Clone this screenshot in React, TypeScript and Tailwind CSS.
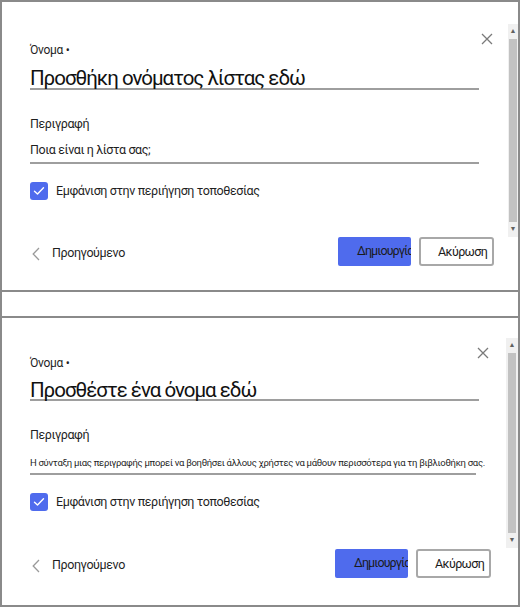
import React from "react";

type PanelProps = {
  title: string;
  description: string;
  descSmall?: boolean;
  variant: "top" | "bottom";
};

const Check = () => (
  <svg width="12" height="10" viewBox="0 0 12 10" fill="none">
    <path d="M1.5 5.2 L4.5 8 L10.5 1.8" stroke="white" strokeWidth="1.4" strokeLinecap="round" strokeLinejoin="round" />
  </svg>
);

const Close = () => (
  <svg width="12" height="12" viewBox="0 0 12 12" fill="none">
    <path d="M1 1 L11 11 M11 1 L1 11" stroke="#7a7a7a" strokeWidth="1.3" />
  </svg>
);

const Chevron = () => (
  <svg width="8" height="14" viewBox="0 0 8 14" fill="none">
    <path d="M7 1 L1.2 7 L7 13" stroke="#9a9a9a" strokeWidth="1.3" />
  </svg>
);

const Scrollbar = ({ top }: { top: boolean }) => (
  <div
    className={
      top
        ? "mt-[22px] flex h-[213px] w-[10px] flex-col items-center bg-[#f0f0f0]"
        : "mt-[20px] flex h-[210px] w-[12px] flex-col items-center bg-[#f0f0f0]"
    }
  >
    <div className="flex h-[15px] items-center text-[7px] leading-none text-[#606060]">▲</div>
    <div className="w-[8px] flex-1 bg-[#c2c2c2]" />
    <div className="flex h-[15px] items-center text-[7px] leading-none text-[#606060]">▼</div>
  </div>
);

function Panel({ title, description, descSmall, variant }: PanelProps) {
  const top = variant === "top";
  return (
    <div className={top ? "relative flex h-[290px] border-b-2 border-[#8a8a8a]" : "relative flex h-[289px] border-t-2 border-[#8a8a8a]"}>
      <div className={top ? "flex-1 pl-[28px] pt-[40px]" : "flex-1 pl-[28px] pt-[37px]"}>
        <div className="w-[449px]">
          <div className="text-[12px] leading-[16px] tracking-[-0.3px] text-[#1f1f1f]">Όνομα •</div>
          <div
            className={
              top
                ? "mt-[3px] h-[29px] border-b-2 border-[#9e9e9e] pt-[6px] text-[20.5px] leading-[22px] tracking-[-1px] text-[#111]"
                : "mt-0 h-[30px] border-b-2 border-[#9e9e9e] pt-[8px] text-[20.5px] leading-[22px] tracking-[-1px] text-[#111]"
            }
          >
            {title}
          </div>
          <div className="mt-[25px] text-[12.5px] leading-[18px] tracking-[-0.4px] text-[#1f1f1f]">Περιγραφή</div>
          {descSmall ? (
            <div className="mt-[11px] w-[446px] whitespace-nowrap border-b-2 border-[#9e9e9e] pb-[2px] text-[9.5px] leading-[16px] tracking-[-0.3px] text-[#1f1f1f]">
              {description}
            </div>
          ) : (
            <div className="mt-[8px] border-b-2 border-[#9e9e9e] pb-[3px] text-[12.5px] leading-[18px] tracking-[-0.4px] text-[#1f1f1f]">
              {description}
            </div>
          )}
          <div className="mt-[18px] flex items-center gap-[8px]">
            <div className="flex h-[18px] w-[18px] items-center justify-center rounded-[3px] bg-[#4f6bed]">
              <Check />
            </div>
            <span className="text-[12.5px] leading-[18px] tracking-[-0.4px] text-[#1f1f1f]">Εμφάνιση στην περιήγηση τοποθεσίας</span>
          </div>
        </div>
        <div className={top ? "mt-[37px] flex w-[464px] items-center" : "mt-[38px] flex w-[461px] items-center"}>
          <div className="ml-[2px] mt-[4px] flex items-center gap-[12px]">
            <Chevron />
            <span className="text-[12.5px] tracking-[-0.4px] text-[#1f1f1f]">Προηγούμενο</span>
          </div>
          <div className="ml-auto flex items-center gap-[8px]">
            <button className="h-[29px] w-[73px] overflow-hidden whitespace-nowrap rounded-[2px] bg-[#4f6bed] pl-[19px] text-left text-[12.5px] tracking-[-0.9px] text-[#1b1b1b]">
              Δημιουργία
            </button>
            <button className="h-[29px] w-[75px] rounded-[3px] border-2 border-[#a8a8a8] bg-white pl-[17px] pt-[2px] text-left text-[12.5px] tracking-[-0.6px] text-[#1b1b1b]">
              Ακύρωση
            </button>
          </div>
        </div>
      </div>
      <Scrollbar top={top} />
      <div className={top ? "absolute left-[479px] top-[31px]" : "absolute left-[475px] top-[29px]"}>
        <Close />
      </div>
    </div>
  );
}

export default function App() {
  return (
    <div
      className="h-[607px] w-[520px] overflow-hidden border-2 border-[#8a8a8a] bg-white"
      style={{ fontFamily: 'Roboto, "Liberation Sans", Arial, sans-serif' }}
    >
      <Panel
        variant="top"
        title="Προσθήκη ονόματος λίστας εδώ"
        description="Ποια είναι η λίστα σας;"
      />
      <div className="h-[24px]" />
      <Panel
        variant="bottom"
        title="Προσθέστε ένα όνομα εδώ"
        description="Η σύνταξη μιας περιγραφής μπορεί να βοηθήσει άλλους χρήστες να μάθουν περισσότερα για τη βιβλιοθήκη σας."
        descSmall
      />
    </div>
  );
}
